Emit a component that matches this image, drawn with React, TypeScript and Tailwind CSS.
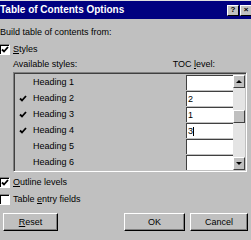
import React from "react";

const rows = [
  { name: "Heading 1", checked: false, level: "" },
  { name: "Heading 2", checked: true, level: "2" },
  { name: "Heading 3", checked: true, level: "1" },
  { name: "Heading 4", checked: true, level: "3", caret: true },
  { name: "Heading 5", checked: false, level: "" },
  { name: "Heading 6", checked: false, level: "" },
];

function Check() {
  return (
    <svg width="8" height="8" viewBox="0 0 8 8">
      <path d="M1 3.5 L3 5.5 L7 1" stroke="#000" strokeWidth="1.8" fill="none" />
    </svg>
  );
}

function CheckBox({ checked }: { checked: boolean }) {
  return (
    <div className="w-[11px] h-[11px] bg-white border-t border-l border-t-[#808080] border-l-[#808080] border-r border-b border-r-[#fff] border-b-[#fff] shadow-[inset_1px_1px_0_#000] flex items-center justify-center">
      {checked && <Check />}
    </div>
  );
}

function Button({ label, u, w }: { label: string; u?: number; w: string }) {
  return (
    <div
      className={`${w} h-[18px] flex items-center justify-center bg-[#c0c0c0] border-t border-l border-t-white border-l-white border-r border-b border-r-black border-b-black shadow-[inset_-1px_-1px_0_#808080]`}
    >
      {u === undefined ? (
        label
      ) : (
        <span>
          {label.slice(0, u)}
          <span className="underline">{label[u]}</span>
          {label.slice(u + 1)}
        </span>
      )}
    </div>
  );
}

export default function App() {
  return (
    <div className="w-[251px] h-[240px] overflow-hidden bg-[#c0c0c0] text-[9px] leading-none text-black font-['Liberation_Sans',Arial,sans-serif]">
      {/* title bar */}
      <div className="h-[19px] border-t border-t-[#dfdfdf] bg-[#000080] flex items-center">
        <span className="ml-0 text-white font-bold text-[10px]">Table of Contents Options</span>
        <div className="ml-auto flex gap-[1px] mr-[-1px]">
          <div className="w-[12px] h-[11px] bg-[#c0c0c0] border-t border-l border-white border-r border-b border-r-black border-b-black flex items-center justify-center font-bold text-[8px]">?</div>
          <div className="w-[12px] h-[11px] bg-[#c0c0c0] border-t border-l border-white border-r border-b border-r-black border-b-black flex items-center justify-center font-bold text-[8px]">×</div>
        </div>
      </div>

      <div className="pt-[9px]">Build table of contents from:</div>

      <div className="mt-[7px] flex items-center gap-[3px] ml-[-1px]">
        <CheckBox checked />
        <span>
          <span className="underline">S</span>tyles
        </span>
      </div>

      <div className="mt-[5px] ml-[13px] flex">
        <span>Available styles:</span>
        <span className="ml-auto mr-[36px]">
          TOC <span className="underline">l</span>evel:
        </span>
      </div>

      {/* list */}
      <div className="mt-[3px] ml-[13px] w-[234px] h-[100px] border-t border-l border-t-[#808080] border-l-[#808080] border-r border-b border-r-white border-b-white shadow-[inset_1px_1px_0_#404040]">
        <div className="flex pt-[2px]">
          <div className="flex-1 flex flex-col gap-[1px]">
            {rows.map((r) => (
              <div key={r.name} className="h-[15px] flex items-center">
                <div className="w-[13px] flex justify-end">{r.checked && <Check />}</div>
                <span className="ml-[6px]">{r.name}</span>
                <div className="ml-auto w-[47px] h-[15px] bg-white border-t border-l border-t-[#404040] border-l-[#404040] flex items-center pl-[1px]">
                  {r.level}
                  {r.caret && <span className="w-px h-[9px] bg-black" />}
                </div>
              </div>
            ))}
          </div>
          <div className="w-[12px] mr-[1px] h-[95px] flex flex-col bg-[#e4e4e4]">
            <div className="h-[13px] bg-[#c0c0c0] border-t border-l border-white border-r border-b border-r-[#404040] border-b-[#404040] flex items-center justify-center">
              <div className="w-0 h-0 border-l-[3px] border-r-[3px] border-b-[3px] border-l-transparent border-r-transparent border-b-black" />
            </div>
            <div className="h-[22px]" />
            <div className="h-[13px] bg-[#c0c0c0] border-t border-l border-white border-r border-b border-r-[#404040] border-b-[#404040]" />
            <div className="flex-1" />
            <div className="h-[13px] bg-[#c0c0c0] border-t border-l border-white border-r border-b border-r-[#404040] border-b-[#404040] flex items-center justify-center">
              <div className="w-0 h-0 border-l-[3px] border-r-[3px] border-t-[3px] border-l-transparent border-r-transparent border-t-black" />
            </div>
          </div>
        </div>
      </div>

      <div className="mt-[5px] flex items-center gap-[3px] ml-[-1px]">
        <CheckBox checked />
        <span>
          <span className="underline">O</span>utline levels
        </span>
      </div>
      <div className="mt-[6px] flex items-center gap-[3px] ml-[-1px]">
        <CheckBox checked={false} />
        <span>
          Table <span className="underline">e</span>ntry fields
        </span>
      </div>

      <div className="mt-[8px] flex ml-[3px]">
        <Button label="Reset" u={0} w="w-[55px]" />
        <div className="ml-auto flex gap-[5px] mr-[3px]">
          <Button label="OK" w="w-[61px]" />
          <Button label="Cancel" w="w-[58px]" />
        </div>
      </div>
    </div>
  );
}
